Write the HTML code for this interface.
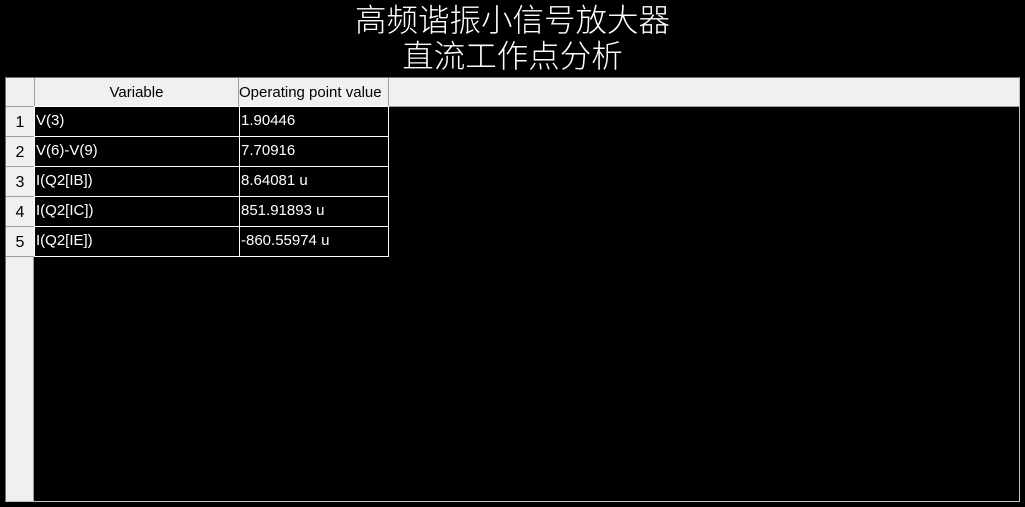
<!DOCTYPE html>
<html><head><meta charset="utf-8"><style>
body{margin:0;width:1025px;height:507px;background:#000;overflow:hidden;position:relative;font-family:"Liberation Sans","Noto Sans CJK SC",sans-serif}
.t{position:absolute;left:0;width:1025px;text-align:center;color:#fff;font-size:31.5px;font-family:"Noto Sans CJK SC",sans-serif;font-weight:300;line-height:34px}
.a{position:absolute;box-sizing:border-box}
.h{background:#f0f0f0;color:#000;font-size:15px}
.c{color:#fff;font-size:15px;border:1px solid #fff;line-height:27px;padding-left:1px;white-space:nowrap;overflow:hidden}
.rh{background:#f0f0f0;color:#000;font-size:16px;text-align:center;border-bottom:1px solid #a0a0a0;border-right:1px solid #a0a0a0;line-height:31px}
</style></head><body>
<div class="t" style="top:1px">高频谐振小信号放大器</div>
<div class="t" style="top:37px">直流工作点分析</div>
<div class="a" style="left:5px;top:77px;width:1015px;height:425px;border-top:1px solid #707070;border-left:1px solid #707070;border-right:1px solid #c0c0c0;border-bottom:1px solid #c0c0c0"></div>
<div class="a h" style="left:6px;top:78px;width:1013px;height:29px;border-bottom:1px solid #a0a0a0"></div>
<div class="a" style="left:6px;top:107px;width:28px;height:394px;background:#f0f0f0;border-right:1px solid #a0a0a0"></div>
<div class="a" style="left:34px;top:78px;width:1px;height:29px;background:#a0a0a0"></div>
<div class="a h" style="left:35px;top:78px;width:204px;height:28px;border-right:1px solid #a0a0a0;text-align:center;line-height:29px">Variable</div>
<div class="a h" style="left:239px;top:78px;width:150px;height:28px;border-right:1px solid #a0a0a0;line-height:29px;overflow:hidden;white-space:nowrap;padding-left:0">Operating point value</div>
<div class="a rh" style="left:6px;top:107px;width:29px;height:30px">1</div>
<div class="a rh" style="left:6px;top:137px;width:29px;height:30px">2</div>
<div class="a rh" style="left:6px;top:167px;width:29px;height:30px">3</div>
<div class="a rh" style="left:6px;top:197px;width:29px;height:30px">4</div>
<div class="a rh" style="left:6px;top:227px;width:29px;height:30px">5</div>
<div class="a c" style="left:34px;top:106px;width:206px;height:31px">V(3)</div>
<div class="a c" style="left:239px;top:106px;width:150px;height:31px">1.90446</div>
<div class="a c" style="left:34px;top:136px;width:206px;height:31px">V(6)-V(9)</div>
<div class="a c" style="left:239px;top:136px;width:150px;height:31px">7.70916</div>
<div class="a c" style="left:34px;top:166px;width:206px;height:31px">I(Q2[IB])</div>
<div class="a c" style="left:239px;top:166px;width:150px;height:31px">8.64081 u</div>
<div class="a c" style="left:34px;top:196px;width:206px;height:31px">I(Q2[IC])</div>
<div class="a c" style="left:239px;top:196px;width:150px;height:31px">851.91893 u</div>
<div class="a c" style="left:34px;top:226px;width:206px;height:31px">I(Q2[IE])</div>
<div class="a c" style="left:239px;top:226px;width:150px;height:31px">-860.55974 u</div>
</body></html>
